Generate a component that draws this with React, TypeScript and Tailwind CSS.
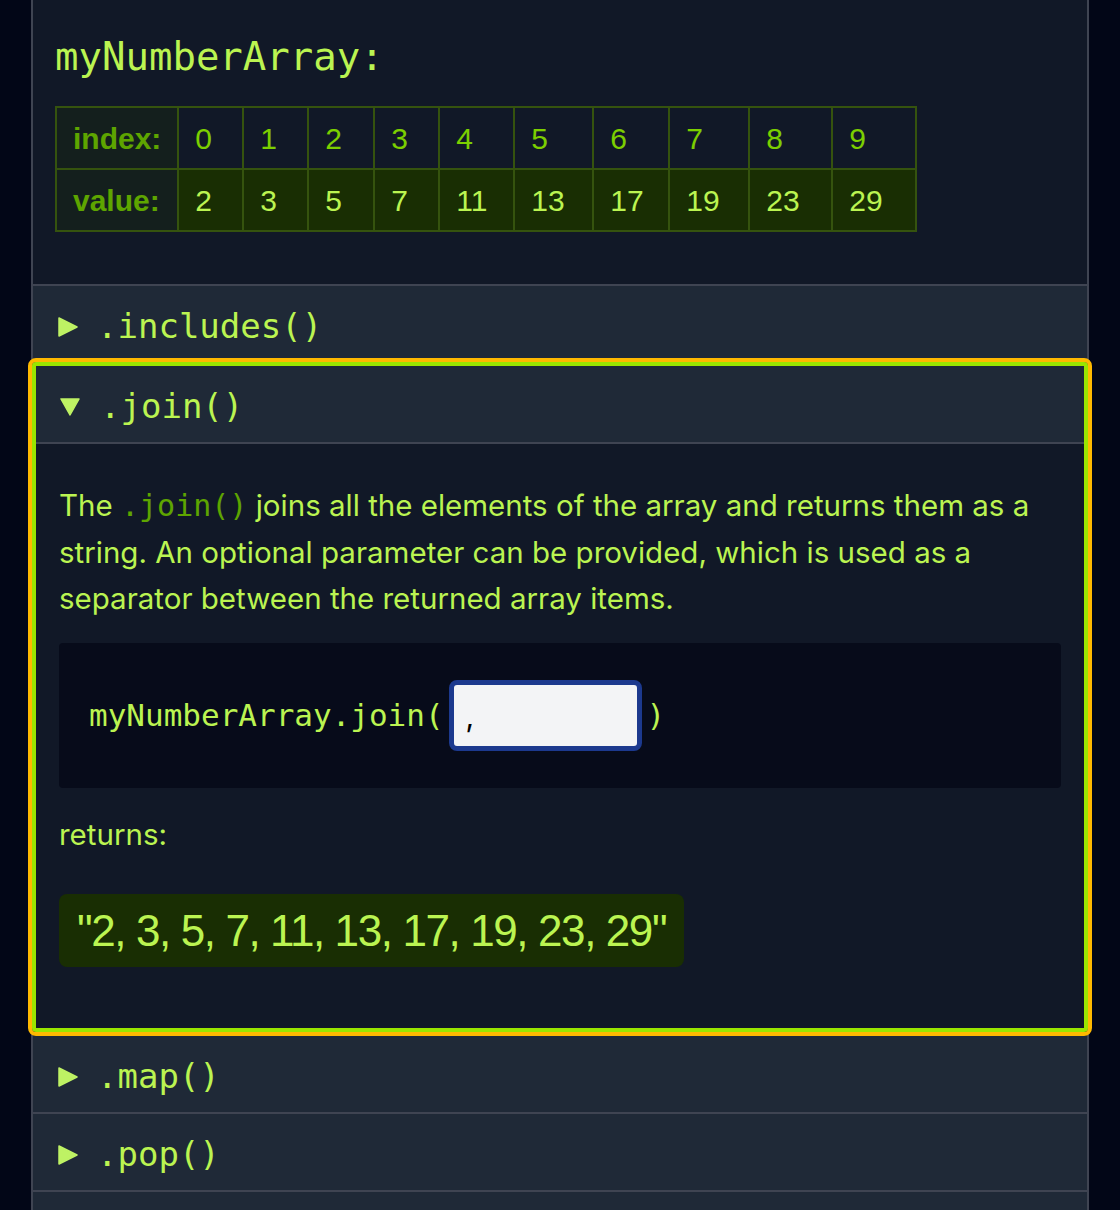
import React from "react";

const indexes = [0, 1, 2, 3, 4, 5, 6, 7, 8, 9];
const values = [2, 3, 5, 7, 11, 13, 17, 19, 23, 29];
const colWidths = ["w-[65px]", "w-[65px]", "w-[66px]", "w-[65px]", "w-[75px]", "w-[79px]", "w-[76px]", "w-[80px]", "w-[83px]", "w-[84px]"];

const mono = "font-['DejaVu_Sans_Mono',monospace]";
const sans = "font-['Liberation_Sans',Arial,sans-serif]";

const ArrowRight = () => (
  <svg width="20" height="20" viewBox="0 0 20 20" className="shrink-0">
    <polygon points="1,1 19,10 1,19" fill="#bef264" stroke="#bef264" strokeWidth="1.5" strokeLinejoin="round" />
  </svg>
);

const ArrowDown = () => (
  <svg width="20" height="20" viewBox="0 0 20 20" className="shrink-0">
    <polygon points="1,2 19,2 10,18" fill="#bef264" stroke="#bef264" strokeWidth="1.5" strokeLinejoin="round" />
  </svg>
);

const ClosedRow = ({ label }: { label: string }) => (
  <div className="flex h-[78px] items-center gap-[19px] border-b-2 border-[#3f4452] bg-[#1f2937] pl-[25px] pt-[5px]">
    <ArrowRight />
    <span className={`${mono} text-[34px] text-lime-300`}>{label}</span>
  </div>
);

export default function App() {
  return (
    <div className="min-h-screen bg-[#020617]">
      <div className="mx-[31px] border-x-2 border-[#3f4452]">
        {/* ARRAY TABLE */}
        <section className="border-b-2 border-[#3f4452] bg-[#111827] px-[22px] pb-[52px] pt-[32px]">
          <h2 className={`${mono} text-[39px] leading-[50px] text-lime-300`}>myNumberArray:</h2>
          <table className={`${sans} mt-[24px] border-collapse text-[30px]`}>
            <tbody>
              <tr className="h-[62px]">
                <th className="w-[122px] border-2 border-lime-900 bg-[#141f1d] px-4 text-left font-bold text-lime-600">index:</th>
                {indexes.map((i) => (
                  <td key={i} className={`${colWidths[i]} border-2 border-lime-900 px-4 text-lime-500`}>
                    {i}
                  </td>
                ))}
              </tr>
              <tr className="h-[62px]">
                <th className="w-[122px] border-2 border-lime-900 bg-[#141f1d] px-4 text-left font-bold text-lime-600">value:</th>
                {values.map((v, i) => (
                  <td key={i} className={`${colWidths[i]} border-2 border-lime-900 bg-lime-950 px-4 text-lime-300`}>
                    {v}
                  </td>
                ))}
              </tr>
            </tbody>
          </table>
        </section>

        <ClosedRow label=".includes()" />

        {/* OPEN: JOIN */}
        <div className="relative z-10 -mx-px -mt-[2px] rounded-[4px] border-4 border-lime-400 outline-4 outline-amber-400">
          <div className="flex h-[78px] items-center gap-[20px] border-b-2 border-[#3f4452] bg-[#1f2937] pl-[24px] pt-[5px]">
            <ArrowDown />
            <span className={`${mono} text-[34px] text-lime-300`}>.join()</span>
          </div>
          <div className="bg-[#111827] px-[23px] pb-[61px] pt-[38px]">
            <p className="font-['Inter',sans-serif] text-[29.5px] leading-[46px] text-lime-300">
              The <code className={`${mono} text-[30px] text-lime-600`}>.join()</code> joins all the elements of the array
              and returns them as a string. An optional parameter can be provided, which is used as a separator between the
              returned array items.
            </p>
            <div className="mt-[22px] flex h-[145px] items-center rounded-[4px] bg-[#070b1a] pl-[30px]">
              <span className={`${mono} text-[31px] text-lime-300`}>myNumberArray.join(</span>
              <input
                defaultValue=","
                className="mx-[5px] h-[71px] w-[193px] rounded-[8px] border-[5px] border-blue-900 bg-gray-100 px-[12px] font-['Inter',sans-serif] text-[30px] text-black outline-none"
              />
              <span className={`${mono} text-[31px] text-lime-300`}>)</span>
            </div>
            <p className="mt-[23px] font-['Inter',sans-serif] text-[29.5px] leading-[46px] text-lime-300">returns:</p>
            <div className="mt-[37px] inline-flex h-[73px] items-center rounded-lg bg-lime-950 px-[18px]">
              <span className={`${sans} text-[44px] tracking-[-1.4px] text-lime-300`}>"2, 3, 5, 7, 11, 13, 17, 19, 23, 29"</span>
            </div>
          </div>
        </div>

        <div className="mt-[4px]">
          <ClosedRow label=".map()" />
          <ClosedRow label=".pop()" />
          <ClosedRow label=".push()" />
        </div>
      </div>
    </div>
  );
}
